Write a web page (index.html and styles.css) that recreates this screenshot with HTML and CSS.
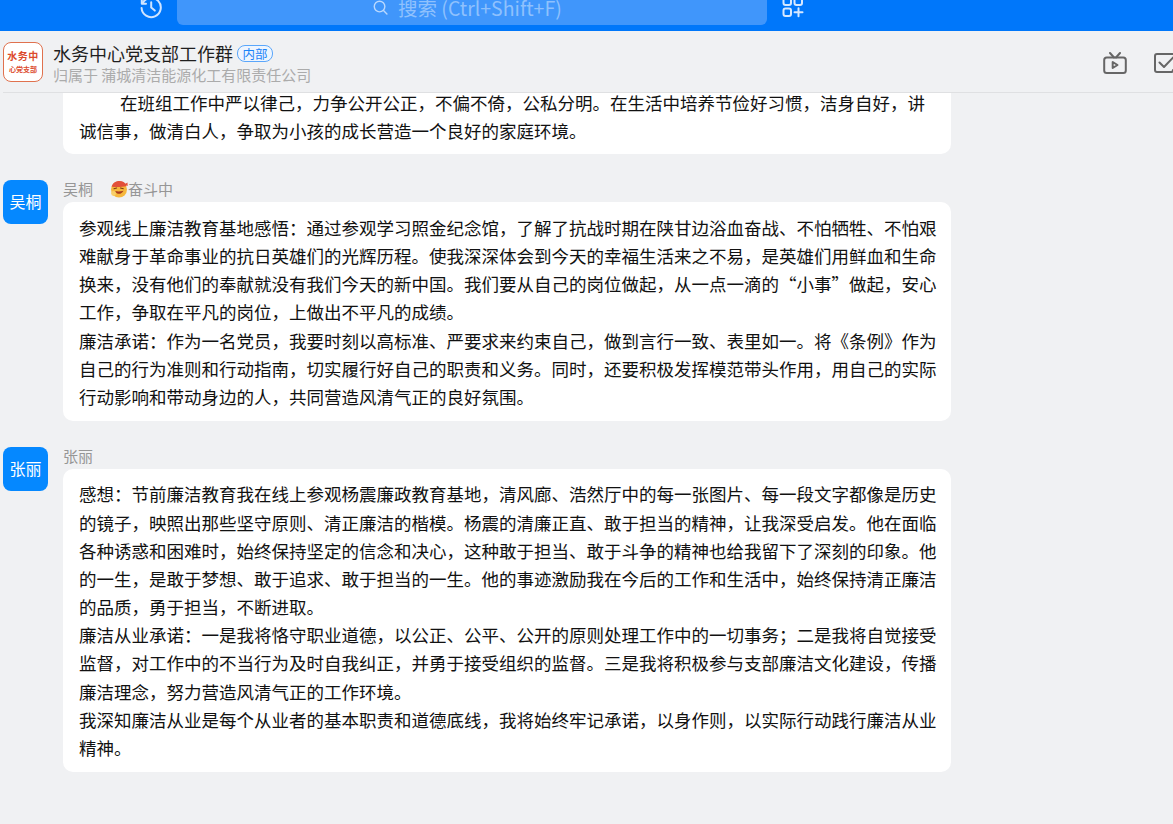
FILE: index.html
```html
<!DOCTYPE html>
<html lang="zh-CN">
<head>
<meta charset="utf-8">
<title>水务中心党支部工作群</title>
<link rel="stylesheet" href="styles.css">
</head>
<body>
<div class="app">
  <div class="topbar">
    <div class="topbar-row">
      <svg class="history-icon" viewBox="0 0 24 24" fill="none" stroke="#cfe4ff" stroke-width="2" stroke-linecap="round" stroke-linejoin="round"><path d="M3.6 8.2A9.6 9.6 0 1 1 2.6 13"/><path d="M2.8 4.6v4.2H7"/><path d="M12.2 7.2v5.4l3.6 3"/></svg>
      <div class="search">
        <svg class="search-icon" viewBox="0 0 18 18" fill="none" stroke="#b9d8fe" stroke-width="1.5" stroke-linecap="round"><circle cx="8" cy="8" r="5.6"/><path d="M12.2 12.2l3.6 3.6"/></svg>
        <span class="search-text">搜索 (Ctrl+Shift+F)</span>
      </div>
      <svg class="apps-icon" viewBox="0 0 22 22" fill="none" stroke="#d6e8ff" stroke-width="2" stroke-linecap="round"><rect x="1.5" y="1.5" width="7.5" height="7.5" rx="2"/><rect x="12.5" y="1.5" width="7.5" height="7.5" rx="2"/><rect x="1.5" y="12.5" width="7.5" height="7.5" rx="2"/><path d="M12.5 16.3h8M16.5 12.3v8"/></svg>
    </div>
  </div>

  <header class="chat-header">
    <div class="group-logo">
      <span class="logo-main">水务中</span>
      <span class="logo-sub">心党支部</span>
    </div>
    <div class="group-info">
      <div class="group-title-row">
        <span class="group-title">水务中心党支部工作群</span>
        <span class="badge">内部</span>
      </div>
      <div class="group-owner">归属于 蒲城清洁能源化工有限责任公司</div>
    </div>
    <div class="header-actions">
      <svg class="tv-icon" viewBox="0 0 24 22" fill="none" stroke="#666" stroke-width="2" stroke-linecap="round" stroke-linejoin="round"><rect x="1.2" y="5.5" width="21.6" height="15.5" rx="2.5"/><path d="M7 1l4 4.5M17 1l-4 4.5"/><path d="M9.7 10v6l4.8-3z"/></svg>
      <svg class="check-icon" viewBox="0 0 24 20" fill="none" stroke="#666" stroke-width="2" stroke-linecap="round" stroke-linejoin="round"><path d="M19 1H3a2 2 0 0 0-2 2v14a2 2 0 0 0 2 2h14a2 2 0 0 0 2-2"/><path d="M5.5 9.5l4.5 4.5L22 1.5"/></svg>
    </div>
  </header>

  <main class="messages">
    <div class="message">
      <div class="avatar-spacer"></div>
      <div class="message-body">
        <div class="bubble bubble-clipped"><p class="indented">在班组工作中严以律己&#xFF0C;力争公开公正&#xFF0C;不偏不倚&#xFF0C;公私分明。在生活中培养节俭好习惯&#xFF0C;洁身自好&#xFF0C;讲诚信事&#xFF0C;做清白人&#xFF0C;争取为小孩的成长营造一个良好的家庭环境。</p></div>
      </div>
    </div>

    <div class="message">
      <div class="avatar">吴桐</div>
      <div class="message-body">
        <div class="sender">
          <span class="sender-name">吴桐</span>
          <svg class="status-emoji" viewBox="0 0 18 18"><circle cx="9" cy="9.5" r="8" fill="#f6b73c"/><path d="M1.6 6.6C3 2.4 6 1 9.5 1c3.6 0 6 1.6 7 5-3 1-12 1.6-14.9.6z" fill="#e2503a"/><path d="M14 4.5l3.5-2 .2 3.5z" fill="#e2503a"/><path d="M4 8.8l2.6-.8M10.5 8l2.8.7" stroke="#7a3b12" stroke-width="1.1" stroke-linecap="round"/><path d="M5 11c1.5 3.8 6.5 3.8 8.5-.3-2.8.8-5.8.9-8.5.3z" fill="#a83a1e"/><circle cx="3.6" cy="13.5" r="2.4" fill="#f8cf6a"/></svg>
          <span class="sender-status">奋斗中</span>
        </div>
        <div class="bubble">
          <p>参观线上廉洁教育基地感悟&#xFF1A;通过参观学习照金纪念馆&#xFF0C;了解了抗战时期在陕甘边浴血奋战、不怕牺牲、不怕艰难献身于革命事业的抗日英雄们的光辉历程。使我深深体会到今天的幸福生活来之不易&#xFF0C;是英雄们用鲜血和生命换来&#xFF0C;没有他们的奉献就没有我们今天的新中国。我们要从自己的岗位做起&#xFF0C;从一点一滴的“小事”做起&#xFF0C;安心工作&#xFF0C;争取在平凡的岗位&#xFF0C;上做出不平凡的成绩。</p>
          <p>廉洁承诺&#xFF1A;作为一名党员&#xFF0C;我要时刻以高标准、严要求来约束自己&#xFF0C;做到言行一致、表里如一。将《条例》作为自己的行为准则和行动指南&#xFF0C;切实履行好自己的职责和义务。同时&#xFF0C;还要积极发挥模范带头作用&#xFF0C;用自己的实际行动影响和带动身边的人&#xFF0C;共同营造风清气正的良好氛围。</p>
        </div>
      </div>
    </div>

    <div class="message">
      <div class="avatar">张丽</div>
      <div class="message-body">
        <div class="sender">
          <span class="sender-name">张丽</span>
        </div>
        <div class="bubble">
          <p>感想&#xFF1A;节前廉洁教育我在线上参观杨震廉政教育基地&#xFF0C;清风廊、浩然厅中的每一张图片、每一段文字都像是历史的镜子&#xFF0C;映照出那些坚守原则、清正廉洁的楷模。杨震的清廉正直、敢于担当的精神&#xFF0C;让我深受启发。他在面临各种诱惑和困难时&#xFF0C;始终保持坚定的信念和决心&#xFF0C;这种敢于担当、敢于斗争的精神也给我留下了深刻的印象。他的一生&#xFF0C;是敢于梦想、敢于追求、敢于担当的一生。他的事迹激励我在今后的工作和生活中&#xFF0C;始终保持清正廉洁的品质&#xFF0C;勇于担当&#xFF0C;不断进取。</p>
          <p>廉洁从业承诺&#xFF1A;一是我将恪守职业道德&#xFF0C;以公正、公平、公开的原则处理工作中的一切事务&#xFF1B;二是我将自觉接受监督&#xFF0C;对工作中的不当行为及时自我纠正&#xFF0C;并勇于接受组织的监督。三是我将积极参与支部廉洁文化建设&#xFF0C;传播廉洁理念&#xFF0C;努力营造风清气正的工作环境。</p>
          <p>我深知廉洁从业是每个从业者的基本职责和道德底线&#xFF0C;我将始终牢记承诺&#xFF0C;以身作则&#xFF0C;以实际行动践行廉洁从业精神。</p>
        </div>
      </div>
    </div>
  </main>
</div>
</body>
</html>
```
FILE: styles.css
```css
* { box-sizing: border-box; }

html, body {
  margin: 0;
  height: 100%;
  overflow: hidden;
}

body {
  background: #f0f1f3;
  font-family: "Noto Sans CJK SC", "Noto Sans", sans-serif;
  color: #1a1a1a;
}

.app {
  height: 824px;
  display: flex;
  flex-direction: column;
  overflow: hidden;
}

/* top bar */
.topbar {
  flex: none;
  height: 31px;
  background: #0077fa;
  overflow: hidden;
}

.topbar-row {
  display: flex;
  align-items: center;
  height: 36px;
  margin-top: -11px;
  padding-left: 139px;
}

.history-icon {
  flex: none;
  width: 24px;
  height: 24px;
}

.search {
  flex: none;
  width: 590px;
  height: 36px;
  margin-left: 14px;
  padding-left: 195px;
  display: flex;
  align-items: center;
  gap: 9px;
  background: #4096fb;
  border-radius: 6px;
}

.search-icon {
  flex: none;
  width: 17px;
  height: 17px;
}

.search-text {
  font-size: 19.5px;
  color: #8fc1fd;
  white-space: nowrap;
}

.apps-icon {
  flex: none;
  width: 22px;
  height: 22px;
  margin-left: 15px;
}

/* chat header */
.chat-header {
  flex: none;
  height: 62px;
  margin-left: 3px;
  display: flex;
  align-items: center;
  border-bottom: 1px solid #dfe0e2;
  position: relative;
}

.group-logo {
  flex: none;
  width: 40px;
  height: 40px;
  margin-top: 1px;
  background: #fff;
  border: 1.5px solid #e0714e;
  border-radius: 8px;
  display: flex;
  flex-direction: column;
  align-items: center;
  justify-content: center;
  color: #dc4a2c;
  font-weight: 700;
  line-height: 1;
}

.logo-main {
  font-size: 10px;
  letter-spacing: 0.5px;
  margin-bottom: 4.5px;
}

.logo-sub {
  font-size: 7px;
}

.group-info {
  flex: none;
  margin-left: 10px;
  margin-top: 3px;
}

.group-title-row {
  display: flex;
  align-items: center;
  height: 24px;
}

.group-title {
  font-size: 18px;
  line-height: 24px;
  color: #1f1f1f;
  white-space: nowrap;
}

.badge {
  flex: none;
  margin-left: 4px;
  margin-top: 1px;
  width: 36px;
  height: 17px;
  border: 1px solid #5aa6fb;
  border-radius: 8px;
  background: #eef5fe;
  color: #1c84f8;
  font-size: 12.5px;
  line-height: 15px;
  text-align: center;
}

.group-owner {
  font-size: 15px;
  line-height: 20px;
  color: #ababab;
  white-space: nowrap;
}

.header-actions {
  position: absolute;
  top: 21px;
  right: 0;
  display: flex;
  align-items: center;
  gap: 27px;
}

.tv-icon {
  flex: none;
  width: 24px;
  height: 22px;
}

.check-icon {
  flex: none;
  width: 24px;
  height: 20px;
  margin-right: -5px;
}

/* messages */
.messages {
  flex: 1;
  min-height: 0;
  overflow: hidden;
  padding-left: 3px;
}

.message {
  display: flex;
  gap: 15px;
  width: 948px;
  margin-bottom: 26px;
}

.avatar-spacer,
.avatar {
  flex: none;
  width: 45px;
}

.avatar {
  height: 44px;
  border-radius: 8px;
  background: #0588ff;
  color: #fff;
  font-size: 16px;
  line-height: 43px;
  text-align: center;
}

.message-body {
  flex: 1;
  min-width: 0;
}

.sender {
  height: 22.4px;
  display: flex;
  align-items: center;
  font-size: 15px;
  line-height: 20px;
  color: #969696;
  padding-bottom: 4px;
}

.sender-name {
  margin-right: 17px;
}

.status-emoji {
  flex: none;
  width: 18px;
  height: 18px;
}

.bubble {
  background: #fff;
  border-radius: 10px;
  padding: 11.5px 14px 9.5px 16px;
  font-size: 17.5px;
  line-height: 28.16px;
  color: #111;
}

.bubble p {
  margin: 0;
}

.bubble-clipped {
  margin-top: -16.25px;
  padding-top: 12px;
  padding-bottom: 9px;
}

.indented {
  text-indent: 41px;
}
```
